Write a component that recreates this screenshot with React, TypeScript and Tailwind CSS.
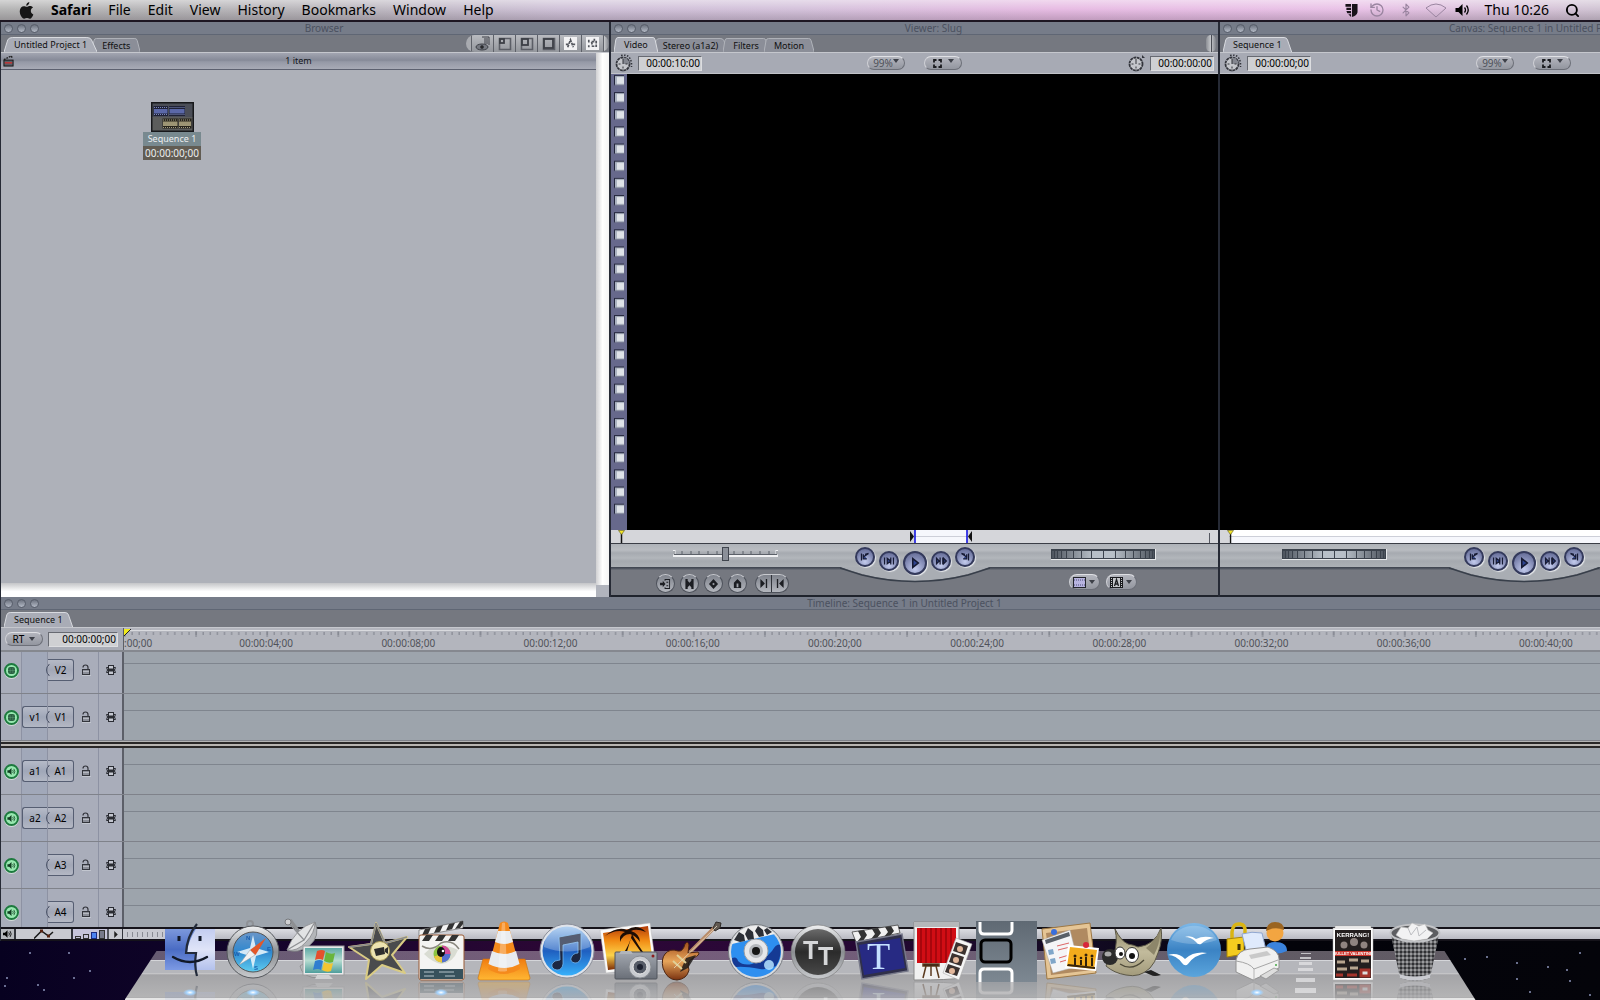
import { Bluetooth, History, Search } from "lucide-react";
import { clsx } from "clsx";

const MENUS = ["File", "Edit", "View", "History", "Bookmarks", "Window", "Help"];

const RULER_LABELS = [
  "00:00:04;00",
  "00:00:08;00",
  "00:00:12;00",
  "00:00:16;00",
  "00:00:20;00",
  "00:00:24;00",
  "00:00:28;00",
  "00:00:32;00",
  "00:00:36;00",
  "00:00:40;00",
];

interface Track {
  name: string;
  source?: string;
  kind: "video" | "audio";
}

const VIDEO_TRACKS: Track[] = [
  { name: "V2", kind: "video" },
  { name: "V1", source: "v1", kind: "video" },
];

const AUDIO_TRACKS: Track[] = [
  { name: "A1", source: "a1", kind: "audio" },
  { name: "A2", source: "a2", kind: "audio" },
  { name: "A3", kind: "audio" },
  { name: "A4", kind: "audio" },
];

/* ---------- Menu bar ---------- */

const SpeakerGlyph = ({ className }: { className?: string }) => (
  <svg viewBox="0 0 14 12" className={className} fill="currentColor">
    <path d="M0 4h3l4-4v12L3 8H0z" />
    <path d="M9 3.500q2 2.500 0 5M11 1.500q3.500 4.500 0 9" fill="none" stroke="currentColor" strokeWidth="1.300" />
  </svg>
);

const MenuBar = () => (
  <header className="flex h-[22px] shrink-0 items-center border-b-2 border-[#1d1622] bg-[linear-gradient(to_bottom,rgba(255,255,255,.45),rgba(255,255,255,.05)_45%,rgba(60,50,60,.22)),linear-gradient(to_right,#b2b2b2,#b6b3b8_20%,#cdbfd6_35%,#d3c0da_50%,#e6b9e2_66%,#e8c0e6_85%,#cfc2d2)] pr-5 pl-[19px] text-[14px] leading-5 text-black">
    <nav className="flex items-center gap-[17px]">
      <button aria-label="Apple menu">
        <svg viewBox="0 0 16 18" className="h-[17px] w-[15px]" fill="#161616">
          <path d="M11 0c.2 1.900-1.500 3.900-3.300 4C7.500 2.200 9.200.3 11 0zM12.600 9.500c0-1.800 1.100-2.800 2.400-3.600C14 4.600 12.700 4.300 11.600 4.300c-1.500 0-2.400.8-3.300.8S6.300 4.400 5.200 4.400C3 4.500.8 6.300.8 9.800c0 3.800 2.600 8 4.700 8 1.100 0 1.600-.7 3-.7 1.300 0 1.800.7 3 .7 1.600 0 3.100-2.600 3.800-4.600-1.700-.7-2.700-2-2.700-3.700z" />
        </svg>
      </button>
      <button className="font-bold">Safari</button>
      {MENUS.map((menu) => (
        <button key={menu}>{menu}</button>
      ))}
    </nav>
    <div className="ml-auto flex items-center">
      <svg viewBox="0 0 13 14" className="mr-[11px] h-[13px] w-[13px]" fill="#18121a">
        <path d="M0 0h6v3H0zM1 4h5v2.500H1zM1 7.500h5V10H2zM3 11h3v3zM7 0h6v9q-1 4-6 5z" />
      </svg>
      <History className="mr-[14px] size-[16px] text-[#9a85a0]" />
      <Bluetooth className="mr-3 size-[14px] text-[#9a85a0]" />
      <svg viewBox="0 0 22 15" className="mr-2 h-[15px] w-[22px]" fill="none" stroke="#9a85a0">
        <path d="M1 5Q11-3 21 5L11 14z" />
      </svg>
      <SpeakerGlyph className="mr-[14px] h-3 w-[15px]" />
      <time>Thu 10:26</time>
      <Search className="ml-4 size-[15px]" strokeWidth={3} />
    </div>
  </header>
);

/* ---------- Shared window parts ---------- */

const TitleBar = ({ title, className = "pl-[38px]" }: { title: string; className?: string }) => (
  <div
    className={clsx(
      "relative flex h-[13px] shrink-0 items-center justify-center border-b border-[#5f6674] bg-[#767c89] text-[10px] leading-3 text-[#4b515f]",
      className,
    )}
  >
    <div className="absolute left-[3px] flex gap-[4px]">
      {["Close", "Minimize", "Zoom"].map((label) => (
        <button
          key={label}
          aria-label={label}
          className="size-[9px] rounded-full border border-[#575d6a] bg-linear-to-b from-[#6d7380] to-[#b4bac6]"
        />
      ))}
    </div>
    <span className="whitespace-nowrap">{title}</span>
  </div>
);

const Tab = ({ label, active }: { label: string; active?: boolean }) => (
  <button
    role="tab"
    aria-selected={!!active}
    className={clsx(
      "relative -mr-[5px] px-[10px] text-[9px] whitespace-nowrap text-[#101010]",
      active ? "z-10 h-[15px] leading-[16px]" : "h-[14px] leading-[15px]",
    )}
  >
    <svg className="absolute inset-0 h-full w-full" viewBox="0 0 100 15" preserveAspectRatio="none">
      <path
        d="M0 15L4 3Q5 .5 9 .5H89Q93 .5 94 3L100 15"
        fill={active ? "#a9acb6" : "#8b8e98"}
        stroke={active ? "#d9dbe0" : "#b0b3ba"}
        vectorEffect="non-scaling-stroke"
      />
    </svg>
    <span className="relative">{label}</span>
  </button>
);

const TabStrip = ({ tabs, children }: { tabs: string[]; children?: React.ReactNode }) => (
  <div className="flex h-[18px] shrink-0 items-end justify-between border-b border-[#c5c7cd] bg-[#757880] pl-[3px]">
    <div role="tablist" className="flex items-end">
      {tabs.map((tab, i) => (
        <Tab key={tab} label={tab} active={i === 0} />
      ))}
    </div>
    {children}
  </div>
);

const EndCap = () => (
  <span className="mr-[2px] flex h-[17px] w-[10px] justify-center rounded-full bg-linear-to-r from-[#8b8e94] via-[#c9cbce] to-[#7d8087]">
    <span className="w-px bg-[#4a4d54]" />
  </span>
);

const Timecode = ({ label, value, className }: { label: string; value: string; className?: string }) => (
  <input
    aria-label={label}
    defaultValue={value}
    className={clsx(
      "h-[15px] border border-t-[#676a72] border-r-[#dcdde0] border-b-[#dcdde0] border-l-[#676a72] bg-[#cfd0d3] pr-px text-right text-[10px] leading-3 text-black outline-none",
      className,
    )}
  />
);

const Pill = ({ label, children, className }: { label: string; children: React.ReactNode; className?: string }) => (
  <button
    aria-label={label}
    className={clsx(
      "flex items-center justify-center rounded-full border border-t-[#dfe0e4] border-r-[#6c6f78] border-b-[#6c6f78] border-l-[#d0d1d6] bg-linear-to-b from-[#b3b5bd] to-[#93969f]",
      className,
    )}
  >
    {children}
  </button>
);

const DownArrow = ({ className }: { className?: string }) => (
  <svg viewBox="0 0 6 4" className={clsx("h-1 w-[6px]", className)} fill="#3d4048">
    <path d="M0 0h6L3 4z" />
  </svg>
);

/* ---------- Browser ---------- */

const BrowserButtons = () => {
  const cell = "flex h-[17px] w-[22px] items-center justify-center border-r border-[#5e6169] bg-linear-to-b from-[#b9bbc0] to-[#93969c]";
  return (
    <div className="flex overflow-hidden rounded-full">
      <span className="h-[17px] w-[6px] border-r border-[#5e6169] bg-[#a9abb0]" />
      <button aria-label="View" className={cell}>
        <svg viewBox="0 0 16 15" className="h-[15px] w-4" fill="none" stroke="#3c3f46">
          <path d="M7 1h7v8M9 3h4M9 5h4M9 7h4" />
          <ellipse cx="7" cy="11" rx="6" ry="3" fill="#777a82" />
          <circle cx="7" cy="11" r="1.500" fill="#222" />
        </svg>
      </button>
      {[5, 7, 10].map((size) => (
        <button key={size} aria-label={`Layout ${size}`} className={cell}>
          <svg viewBox="0 0 14 14" className="size-[14px]" fill="none" stroke="#3c3f46">
            <path d="M1.500 1.500h11v11h-11z" strokeWidth="1.600" stroke="#5b5e66" />
            <rect x="2" y="2" width={size - 1} height={size - 1} strokeWidth="1.800" />
          </svg>
        </button>
      ))}
      {["M4 11l3-8 3 8M2 8h3M9 8h3", "M3 3v3M3 9v2M6 5h5v5H7zM9 2v2"].map((d) => (
        <button key={d} aria-label="Filter" className={cell}>
          <svg viewBox="0 0 14 14" className="size-[13px]" fill="none" stroke="#54575e" strokeWidth="1.800">
            <rect x="0" y="0" width="14" height="14" fill="#f2f2f4" stroke="none" />
            <path d={d} strokeDasharray="3 1" />
          </svg>
        </button>
      ))}
      <span className="h-[17px] w-[5px] bg-linear-to-r from-[#c9cbce] to-[#7d8087]" />
    </div>
  );
};

const Browser = () => (
  <section className="flex w-[611px] shrink-0 flex-col border-r-2 border-l border-[#262a35]">
    <TitleBar title="Browser" />
    <TabStrip tabs={["Untitled Project 1", "Effects"]}>
      <BrowserButtons />
    </TabStrip>
    <div className="flex min-h-0 flex-1">
      <div className="flex flex-1 flex-col bg-[#aeb1b9]">
        <div className="relative flex h-[17px] items-center justify-center border-b border-[#5d6170] bg-[linear-gradient(to_bottom,#a2a5b1,#868a98_45%,#9599a6_55%,#a8abb6)] text-[9px] text-[#14161b]">
          <svg viewBox="0 0 12 13" className="absolute left-[2px] h-3 w-[11px]">
            <path d="M1 5L9 1l1 2" fill="none" stroke="#222" strokeWidth="1.600" strokeDasharray="2 1" />
            <rect x="1" y="5.500" width="10" height="6.500" fill="#5a5d66" stroke="#111" />
            <path d="M2 8.500h8" stroke="#c33" strokeWidth="1.500" />
          </svg>
          1 item
        </div>
        <div className="flex flex-1 items-start pt-[32px] pl-[142px]">
          <figure className="flex w-[58px] flex-col items-center text-[9px]">
            <svg viewBox="0 0 43 30" className="h-[30px] w-[43px]">
              <rect width="43" height="30" fill="#17181b" />
              <rect x="1.500" y="1.500" width="40" height="14" fill="#4b4e57" />
              <rect x="1.500" y="15" width="40" height="13.500" fill="#5c5d5c" />
              <g fill="#1f2236">
                <rect x="2.500" y="4" width="14.500" height="10" />
                <rect x="18" y="4" width="16" height="10" />
              </g>
              <g fill="#26241c">
                <rect x="11.500" y="16.500" width="15.500" height="10" />
                <rect x="27.500" y="16.500" width="13" height="10" />
              </g>
              <g stroke="#7d86ba" strokeDasharray="1 1">
                <path d="M3 5.500h13M18.500 5.500h15M3 12.500h13M18.500 12.500h15" />
              </g>
              <rect x="3" y="7" width="13.500" height="4.500" fill="#5b68a8" />
              <rect x="18.500" y="7" width="15" height="4.500" fill="#5b68a8" />
              <rect x="12" y="19.500" width="14.500" height="4.500" fill="#9d9574" />
              <rect x="28" y="19.500" width="12" height="4.500" fill="#9d9574" />
              <g stroke="#a39c80" strokeDasharray="1 1">
                <path d="M12 18h14.500M28 18h12M12 25.500h14.500M28 25.500h12" />
              </g>
            </svg>
            <figcaption className="w-full text-center text-[#eceeef]">
              <span className="block h-[14px] bg-[#78898f] leading-[14px]">Sequence 1</span>
              <span className="block h-[14px] bg-[#615c53] text-[10px] leading-[14px]">00:00:00;00</span>
            </figcaption>
          </figure>
        </div>
        <div className="h-[14px] bg-linear-to-b from-[#c4c5c8] to-white to-60%" />
      </div>
      <div className="flex w-[13px] flex-col">
        <div className="flex-1 bg-linear-to-r from-[#d0d0d2] via-white to-[#f4f4f4]" />
        <div className="h-3 bg-[#b1b4bd]" />
      </div>
    </div>
  </section>
);

/* ---------- Viewer / Canvas ---------- */

const Clock = ({ shaded }: { shaded?: boolean }) => (
  <svg viewBox="0 0 18 18" className="size-[18px] shrink-0">
    <circle cx="8" cy="10" r="6.500" fill="#c4c6cb" stroke="#32343b" strokeWidth="1.800" strokeDasharray="2.800 .6" />
    {shaded ? (
      <>
        <path d="M8 10V3.500A6.500 6.500 0 0 1 14.500 10z" fill="#83868f" />
        <path d="M6 1.500q9-2 10.500 7.500v4" fill="none" stroke="#32343b" strokeWidth="1.500" strokeDasharray="1.500 1.500" />
      </>
    ) : (
      <path d="M14 1l3 3h-3z" fill="#32343b" />
    )}
    <path d="M8 10V5M3.500 10h2M8 14.500v-2M12.500 10h-2" stroke="#32343b" />
  </svg>
);

const ZoomPills = () => (
  <>
    <Pill label="Zoom level" className="h-[14px] w-[38px] text-[10px] leading-3 text-[#4d5058]">
      99%
      <DownArrow className="mb-1" />
    </Pill>
    <Pill label="View options" className="ml-[19px] h-[14px] w-[38px] gap-[6px]">
      <svg viewBox="0 0 9 9" className="size-[9px]" fill="none" stroke="#1b1c20" strokeWidth="1.800">
        <path d="M3.500 1H1v2.500M5.500 1H8v2.500M3.500 8H1V5.500M5.500 8H8V5.500" />
      </svg>
      <DownArrow className="mb-1" />
    </Pill>
  </>
);

const TRANSPORT = [
  { label: "Previous edit", path: "M5 5v8M13 5l-6 4M7 6v5h4M13 5l-4 1", drop: "mt-[3px]", size: "size-[20px]" },
  { label: "Play in to out", path: "M4 5v8M14 5v8M7 6v6l4-3zM11 5v8", drop: "mt-[7px]", size: "size-[20px]" },
  { label: "Play", path: "M7 5v8l5-4z", drop: "mt-[7px]", size: "size-[24px]" },
  { label: "Play around", path: "M8 5v8M4 6v6l3-3zM11 5v8M12 6v6l3-3z", drop: "mt-[7px]", size: "size-[20px]" },
  { label: "Next edit", path: "M13 5v8M5 5l6 4M11 6v5H7M5 5l4 1", drop: "mt-[3px]", size: "size-[20px]" },
];

const Transport = () => (
  <div className="relative flex h-[52px] w-[150px] items-start justify-center gap-[4px]">
    <svg viewBox="0 0 150 16" className="absolute top-[23px] left-0 h-4 w-[150px]">
      <path d="M0 0Q12 4 22 7Q75 21 128 7Q138 4 150 0z" fill="#a9adb3" />
      <path d="M0 1Q12 5 22 8Q75 21 128 8Q138 5 150 1" fill="none" stroke="#383f4a" strokeWidth="1.500" />
    </svg>
    {TRANSPORT.map(({ label, path, drop, size }) => (
      <button
        key={label}
        aria-label={label}
        className={clsx(
          "relative shrink-0 rounded-full border-2 border-[#343a5c] bg-[radial-gradient(circle_at_50%_80%,#c3cbed,#7e86b0_60%,#5b628c)] shadow-[1px_1px_1px_#e8eaee]",
          drop,
          size,
        )}
      >
        <svg viewBox="0 0 18 18" className="h-full w-full" fill="#2f458f" stroke="#161a33" strokeWidth="1.400">
          <path d={path} />
        </svg>
      </button>
    ))}
  </div>
);

const JOG_LINES = [3, 6, 10, 15, 22, 30, 40, 52, 64, 74, 82, 89, 94, 98, 101];

const JogWheel = () => (
  <svg viewBox="0 0 105 11" className="h-[11px] w-[105px]">
    <defs>
      <linearGradient id="jog">
        <stop offset="0" stopColor="#4d545e" />
        <stop offset=".4" stopColor="#b8c0c8" />
        <stop offset=".6" stopColor="#b8c0c8" />
        <stop offset="1" stopColor="#4d545e" />
      </linearGradient>
    </defs>
    <rect width="105" height="11" fill="#e6e8ea" />
    <rect width="104" height="10" fill="#3b424c" />
    <rect x="1" y="2" width="102" height="7" fill="url(#jog)" />
    {JOG_LINES.map((x) => (
      <path key={x} d={`M${x + 0.5} 2v7`} stroke="#3b424c" />
    ))}
  </svg>
);

const ShuttleSlider = () => (
  <div className="relative h-[14px] w-[105px]">
    <svg viewBox="0 0 105 14" className="absolute inset-0 h-full w-full">
      <path d="M1 3v5.500h103V3" fill="none" stroke="#f0f1f3" strokeWidth="3" />
      <path d="M1 4v3.500h103V4M9 4v3M18 4v3M26 4v3M35 4v3M44 4v3M61 4v3M70 4v3M78 4v3M87 4v3M96 4v3" fill="none" stroke="#5b6068" />
    </svg>
    <input
      type="range"
      aria-label="Shuttle"
      defaultValue={50}
      className="absolute inset-0 h-[14px] w-full appearance-none bg-transparent [&::-webkit-slider-thumb]:h-[14px] [&::-webkit-slider-thumb]:w-[7px] [&::-webkit-slider-thumb]:appearance-none [&::-webkit-slider-thumb]:border [&::-webkit-slider-thumb]:border-[#40454e] [&::-webkit-slider-thumb]:bg-[#8b9099]"
    />
  </div>
);

const ROUND_BUTTONS = [
  { label: "Match frame", path: "M0 4h3V2l3 3.500L3 9V7H0zM5 0h6v11H5V9h1v1h4V1H6v1H5zM7 3h2v1H7zM7 7h2v1H7z" },
  { label: "Mark clip", path: "M1.500 0H4v2l2 2 2-2V0h2.500v11H8V9L6 7 4 9v2H1.500z" },
  { label: "Add keyframe", path: "M6 0l5 5.500L6 11 1 5.500zM6 4L4.500 5.500 6 7l1.500-1.500z" },
  { label: "Add marker", path: "M2 10V4l4-4 4 4v6zM5 5v4h2V5z" },
];

const EditButtons = () => (
  <div className="flex gap-[5px]">
    {ROUND_BUTTONS.map(({ label, path }) => (
      <button
        key={label}
        aria-label={label}
        className="flex size-[19px] items-center justify-center rounded-full border border-[#4e525b] border-t-[#c8cacf] bg-linear-to-b from-[#7f838c] to-[#b4b7be]"
      >
        <svg viewBox="0 0 12 11" className="h-[10px] w-[11px]" fill="#1c1e23" fillRule="evenodd">
          <path d={path} />
        </svg>
      </button>
    ))}
    <div className="ml-[3px] flex h-[19px] overflow-hidden rounded-full border border-[#4e525b] border-t-[#c8cacf] bg-linear-to-b from-[#7f838c] to-[#b4b7be]">
      <button aria-label="Mark in" className="flex w-[16px] items-center justify-center border-r border-[#30333a]">
        <svg viewBox="0 0 8 10" className="h-[9px] w-2" fill="#1c1e23">
          <path d="M0 0l5 5-5 5zM6 0h1.500v10H6z" />
        </svg>
      </button>
      <button aria-label="Mark out" className="flex w-[16px] items-center justify-center">
        <svg viewBox="0 0 8 10" className="h-[9px] w-2" fill="#1c1e23">
          <path d="M8 0L3 5l5 5zM.5 0H2v10H.5z" />
        </svg>
      </button>
    </div>
  </div>
);

const GeneratorPills = () => (
  <div className="flex gap-[6px]">
    <Pill label="Recent clips" className="h-4 w-[31px] gap-[3px]">
      <svg viewBox="0 0 13 11" className="h-[11px] w-[13px]">
        <rect x=".5" y=".5" width="12" height="10" fill="#b7b3df" stroke="#23252c" />
        <path d="M1 3h11M1 8h11" stroke="#4a4a78" strokeDasharray="1 1" />
      </svg>
      <DownArrow />
    </Pill>
    <Pill label="Generators" className="h-4 w-[31px] gap-[3px]">
      <svg viewBox="0 0 13 11" className="h-[11px] w-[13px]">
        <rect width="13" height="11" fill="#1b1c20" />
        <rect x="3" y="1" width="7" height="9" fill="#c6c8cc" />
        <path d="M1.500 1v9M11.500 1v9" stroke="#c6c8cc" strokeDasharray="1 1" />
        <path d="M4.500 9L6.500 2.500 8.500 9M5 7h3" fill="none" stroke="#1b1c20" strokeWidth="1.300" />
      </svg>
      <DownArrow />
    </Pill>
  </div>
);

const Playhead = () => (
  <svg viewBox="0 0 7 13" className="h-[13px] w-[7px] shrink-0">
    <path d="M3.500 3v10" stroke="#111" strokeWidth="1.500" />
    <path d="M.5.500h6L3.500 4.500z" fill="#f1e52a" stroke="#5b5510" strokeWidth=".6" />
  </svg>
);

interface ControlDeckProps {
  left: React.ReactNode;
  right: React.ReactNode;
}

const ControlDeck = ({ left, right }: ControlDeckProps) => (
  <div className="grid h-[53px] shrink-0 grid-cols-[1fr_150px_1fr] border-b-2 border-[#1f232c] bg-[linear-gradient(to_bottom,#aeb2b8_0,#b9bcc1_6px,#a6aab0_9px,#b2b6bb_14px,#a5a9af_17px,#acb0b5_23px,#3b414c_23px,#565b66_25px,#757880_26px)]">
    {left}
    <Transport />
    {right}
  </div>
);

const Viewer = () => (
  <section className="flex w-[609px] shrink-0 flex-col border-r-2 border-[#262a35]">
    <TitleBar title="Viewer: Slug" />
    <TabStrip tabs={["Video", "Stereo (a1a2)", "Filters", "Motion"]}>
      <EndCap />
    </TabStrip>
    <div className="flex h-[21px] shrink-0 items-center border-b border-[#c1c3c9] bg-[#a7aab4] pr-[4px] pl-[4px]">
      <Clock shaded />
      <Timecode label="Timecode duration" value="00:00:10:00" className="ml-[5px] w-[64px]" />
      <div className="ml-[165px] flex">
        <ZoomPills />
      </div>
      <div className="ml-auto flex items-center gap-[4px]">
        <Clock />
        <Timecode label="Current timecode" value="00:00:00:00" className="w-[64px]" />
      </div>
    </div>
    <div className="flex min-h-0 flex-1 bg-black">
      <svg className="h-full w-[16px]">
        <defs>
          <pattern id="sprockets" width="16" height="17.150" patternUnits="userSpaceOnUse">
            <rect x="3" y="1" width="10" height="10" fill="#23253c" />
            <rect x="4" y="2" width="9" height="9" fill="#aab2c0" />
            <rect x="6" y="3" width="7" height="7" fill="#dfe3e8" />
          </pattern>
        </defs>
        <rect width="16" height="100%" fill="#67698c" />
        <rect width="16" height="443" fill="url(#sprockets)" />
      </svg>
    </div>
    <div className="flex h-[14px] shrink-0 items-start border-b border-[#3b3e46] bg-[#d5d6da] pr-[8px] pl-[7px]">
      <Playhead />
      <svg viewBox="0 0 62 13" className="ml-[285px] h-[13px] w-[62px]">
        <rect x="5" width="52" height="13" fill="#f6f7fc" />
        <path d="M5 6.500h52" stroke="#cdcfd8" />
        <path d="M0 1l4 5.500L0 12zM62 1l-4 5.500 4 5.500z" fill="#111" />
        <path d="M5 0v13M57 0v13" stroke="#1616e0" strokeWidth="1.600" />
      </svg>
      <span className="mt-[3px] ml-auto h-[10px] w-px bg-[#555861]" />
    </div>
    <ControlDeck
      left={
        <div className="flex flex-col gap-[13px] pt-[3px] pl-[45px]">
          <div className="pl-[17px]">
            <ShuttleSlider />
          </div>
          <EditButtons />
        </div>
      }
      right={
        <div className="flex flex-col items-start gap-[14px] pt-[5px] pl-[61px]">
          <JogWheel />
          <div className="pl-[18px]">
            <GeneratorPills />
          </div>
        </div>
      }
    />
  </section>
);

const Canvas = () => (
  <section className="flex min-w-0 flex-1 overflow-hidden">
    {/* the window keeps its width and runs off the right edge of the display */}
    <div className="flex w-[608px] shrink-0 flex-col">
      <TitleBar title="Canvas: Sequence 1 in Untitled Project 1" />
      <TabStrip tabs={["Sequence 1"]} />
      <div className="flex h-[21px] shrink-0 items-center border-b border-[#c1c3c9] bg-[#a7aab4] pl-[4px]">
        <Clock shaded />
        <Timecode label="Sequence timecode" value="00:00:00;00" className="ml-[5px] w-[64px]" />
        <div className="ml-[165px] flex">
          <ZoomPills />
        </div>
      </div>
      <div className="flex-1 bg-black" />
      <div className="h-[14px] shrink-0 border-b border-[#3b3e46] bg-[linear-gradient(to_right,#d5d6da_9px,transparent_9px),linear-gradient(to_bottom,#fff_6px,#cdcfd8_6px,#cdcfd8_7px,#f6f7fc_7px)] pl-[7px]">
        <Playhead />
      </div>
      <ControlDeck
        left={
          <div className="pt-[5px] pl-[62px]">
            <JogWheel />
          </div>
        }
        right={<div />}
      />
    </div>
  </section>
);

/* ---------- Timeline ---------- */

const Ruler = () => (
  <div className="relative h-[22px] flex-1 overflow-hidden bg-[#b3b5bd]">
    <svg className="absolute inset-x-0 top-0 h-[10px] w-full">
      <defs>
        <pattern id="ticks" width="7.110" height="10" patternUnits="userSpaceOnUse">
          <path d="M1 4v3" stroke="#7d808a" />
        </pattern>
        <pattern id="majorTicks" width="71.100" height="10" patternUnits="userSpaceOnUse">
          <path d="M1 3v6" stroke="#7d808a" />
        </pattern>
      </defs>
      <path d="M0 2.500h2000" stroke="#d9dade" />
      <rect width="100%" height="10" fill="url(#ticks)" />
      <rect width="100%" height="10" fill="url(#majorTicks)" />
      <path d="M0 1h7L0 8z" fill="#f1ea1c" />
      <path d="M7 1L0 8" stroke="#222" />
    </svg>
    <div className="flex w-[1493px] pt-[9px] text-[10px] leading-3 text-[#505259]">
      {/* first label starts left of the visible range */}
      <span className="w-[71px]">:00;00</span>
      {RULER_LABELS.map((label) => (
        <span key={label} className="flex-1 text-center">
          {label}
        </span>
      ))}
    </div>
  </div>
);

const LockIcon = () => (
  <svg viewBox="0 0 10 12" className="h-3 w-[10px]" fill="none" stroke="#33353c">
    <path d="M2 3.500Q2 1 4.500 1 7 1 7 3.500v2" strokeWidth="1.200" />
    <rect x="1.500" y="5.500" width="7" height="5" fill="#8b8e98" />
    <path d="M2 7.500h6M1 11.500h9" stroke="#d3d6de" strokeWidth=".6" />
  </svg>
);

const AutoSelectIcon = () => (
  <svg viewBox="0 0 12 12" className="h-3 w-3" fill="none" stroke="#2a2c33">
    <rect x="3.500" y="1.500" width="5" height="9" fill="#c3c6cf" />
    <path d="M3.500 3.500h-2l1 2.500-1 2.500h2M8.500 3.500h2l-1 2.500 1 2.500h-2" />
    <path d="M3 5h6v2H3z" fill="#2a2c33" />
  </svg>
);

const TrackRow = ({ track }: { track: Track }) => (
  <div className="flex h-[47px] shrink-0 border-b border-[#7f828a]">
    <div className="flex w-[123px] shrink-0 items-center border-r-2 border-[#5c5f68] bg-[#a9adba]">
      <div className="flex w-[20px] justify-center">
        <button
          aria-label={`Enable ${track.name}`}
          className="flex size-[15px] items-center justify-center rounded-full border-2 border-[#1d7a3e] bg-[#98e8b0] text-[#123c22] shadow-[0_1px_0_#d3dcda]"
        >
          {track.kind === "audio" ? (
            <SpeakerGlyph className="h-[7px] w-[9px]" />
          ) : (
            <svg viewBox="0 0 8 8" className="size-[7px]">
              <rect width="8" height="8" rx="2.500" fill="#2a5f41" />
              <path d="M2.500 1v6M5.500 1v6M0 4h8" stroke="#6fb588" strokeWidth=".4" />
            </svg>
          )}
        </button>
      </div>
      <div className="flex h-full w-[27px] items-center justify-end border-x border-[#8d92a3] bg-[#a1a8b9] text-[10px]">
        {track.source ? (
          <button className="h-[22px] w-[25px] rounded-l-[3px] border border-r-0 border-[#565e72] bg-linear-to-b from-[#b6bbc8] via-[#a0a7b8] to-[#b2b7c4]">
            {track.source}
          </button>
        ) : null}
      </div>
      <button className="relative h-[22px] w-[26px] rounded-r-[3px] border border-l-0 border-[#565e72] bg-linear-to-b from-[#b6bac6] via-[#a2a7b6] to-[#b4b8c4] text-[10px]">
        <svg viewBox="0 0 4 20" className="absolute top-0 -left-[2px] h-5 w-1" fill="none" stroke="#4c5468">
          <path d="M3 4v1Q.5 6 .5 10T3 15v1" />
        </svg>
        {track.name}
      </button>
      <button aria-label={`Lock ${track.name}`} className="flex h-full w-[25px] items-center justify-center border-r border-[#8d92a3]">
        <LockIcon />
      </button>
      <button aria-label={`Auto select ${track.name}`} className="flex flex-1 justify-center">
        <AutoSelectIcon />
      </button>
    </div>
    <div className="flex-1 bg-[#9da4ac]">
      <div className="h-[17px] border-b border-[#7f858e]" />
    </div>
  </div>
);

const Timeline = () => (
  <section className="flex shrink-0 flex-col border-l border-[#262a35]">
    <TitleBar title="Timeline: Sequence 1 in Untitled Project 1" className="pl-[208px]" />
    <TabStrip tabs={["Sequence 1"]} />
    <div className="flex border-b-2 border-[#85888f]">
      <div className="flex w-[123px] shrink-0 items-center justify-between border-r border-[#5c5f68] bg-[#a9acb6] pr-[5px] pl-[4px]">
        <Pill label="RT" className="h-[14px] w-[38px] gap-[5px] text-[10px] leading-3">
          RT
          <DownArrow />
        </Pill>
        <Timecode label="Playhead timecode" value="00:00:00;00" className="w-[70px]" />
      </div>
      <Ruler />
    </div>
    {/* upper tracks are scrolled slightly under the ruler */}
    <div className="flex h-[89px] flex-col justify-end overflow-hidden">
      {VIDEO_TRACKS.map((track) => (
        <TrackRow key={track.name} track={track} />
      ))}
    </div>
    <div className="h-[7px] bg-[linear-gradient(to_bottom,#b4b4b4_1px,#2a2828_1px,#2a2828_3px,#b9b6b2_3px,#b9b6b2_5px,#2a2828_5px)]" />
    <div className="h-[179px] overflow-hidden">
      {AUDIO_TRACKS.map((track) => (
        <TrackRow key={track.name} track={track} />
      ))}
    </div>
    <div className="flex h-[14px] border-y-2 border-[#15131a] bg-[#c9cad1] [&>*]:h-full">
      <button aria-label="Audio controls" className="flex w-[15px] items-center justify-center border-r-2 border-[#33353c] bg-[#b6b8bd]">
        <SpeakerGlyph className="h-2 w-[9px]" />
      </button>
      <button aria-label="Clip keyframes" className="flex w-[57px] items-center justify-center border-r-2 border-[#33353c]">
        <svg viewBox="0 0 20 10" className="h-[10px] w-5" fill="none" stroke="#191919" strokeWidth="1.500">
          <path d="M0 9.500L7.500 2l7 5L19 3" />
          <path d="M6 2h3M13 7h3" stroke="#521" strokeWidth="3" />
        </svg>
      </button>
      <button aria-label="Track height" className="flex w-[36px] items-end gap-[2px] border-r-2 border-[#55575f] bg-[#c6c4da] px-[2px]">
        <i className="h-[3px] w-[6px] border border-[#333]" />
        <i className="h-[5px] w-[6px] border border-[#333]" />
        <i className="h-[7px] w-[6px] border border-[#1a2a80] bg-[#4b82f0]" />
        <i className="h-[9px] w-[6px] border border-[#333] bg-[#77798a]" />
      </button>
      <button aria-label="Track layout" className="flex w-[14px] items-center justify-center border-r border-[#33353c]">
        <svg viewBox="0 0 4 8" className="h-[7px] w-1">
          <path d="M0 0l4 4-4 4z" fill="#222" />
        </svg>
      </button>
      <span className="w-[44px] bg-[repeating-linear-gradient(to_right,transparent_0,transparent_4px,#8a8c94_4px,#8a8c94_5px)] bg-[length:100%_5px] bg-center bg-no-repeat" />
      <span className="flex-1 border-l-2 border-[#33353c] bg-linear-to-b from-[#dcdde2] to-[#b9bac2]" />
    </div>
  </section>
);

/* ---------- Dock icons ---------- */

const FinderIcon = () => (
  <>
    <rect x="7" y="11" width="50" height="41" fill="url(#finderLight)" />
    <path d="M7 11h31q-8 12-9 24h9q0 8 1 17H7z" fill="url(#finderDark)" />
    <path d="M39 6Q29 18 28 35h10Q36 48 39 58" fill="none" stroke="#222a3a" strokeWidth="2.200" />
    <path d="M21 18v5M42 18v5" stroke="#111827" strokeWidth="3" />
    <path d="M15 39q17 10 34 0" fill="none" stroke="#111827" strokeWidth="2.400" strokeLinecap="round" />
  </>
);

const SafariIcon = () => (
  <>
    <circle cx="29" cy="6" r="3" fill="none" stroke="#8e9196" strokeWidth="2" />
    <circle cx="32" cy="34" r="26" fill="url(#chrome)" stroke="#55585d" />
    <circle cx="32" cy="34" r="20" fill="url(#sky)" stroke="#555" />
    <path d="M32 17l3 13 13 4-13 4-3 13-3-13-13-4 13-4z" fill="#e6f3fb" opacity=".9" />
    <path d="M45 20L34.500 37 29 32z" fill="#e2582a" />
    <path d="M18 47l16-10-5-5z" fill="#f2f2f2" stroke="#999" strokeWidth=".5" />
    <g fill="#1b5fae" fontSize="6" fontFamily="Liberation Sans, sans-serif" fontWeight="bold">
      <text x="25" y="22">N</text>
      <text x="33" y="52">S</text>
      <text x="13" y="38">W</text>
      <text x="46" y="33">E</text>
    </g>
  </>
);

const RemoteDesktopIcon = () => (
  <>
    <path d="M17 48q2 12 20 12l4-2q-16 0-18-14z" fill="#b9bbbd" stroke="#777" strokeWidth=".6" />
    <path d="M4 5l4-2 14 19" stroke="#8d8f92" strokeWidth="3" fill="none" />
    <path d="M32 4Q38 18 26 28 15 36 4 32z" fill="#b4b6b9" stroke="#7b7d80" strokeWidth=".8" />
    <path d="M32 4Q12 10 4 32 14 34 23 24 32 15 32 4z" fill="#e2e3e4" stroke="#86888b" strokeWidth=".8" />
    <path d="M4 3l17 19L32 4M21 22L4 32" stroke="#8d8f92" strokeWidth="1.300" fill="none" />
    <circle cx="5" cy="4" r="3" fill="#cfd0d2" stroke="#77797c" />
    <rect x="20" y="28" width="41" height="29" fill="#e9eaeb" stroke="#9a9b9d" />
    <rect x="22" y="30" width="37" height="25" fill="url(#teal)" />
    <path d="M34 33q5-2 8 0l-2 9q-4-2-8 0z" fill="#e4502c" />
    <path d="M43 34q5 3 9 1l-2 9q-4 2-9-1z" fill="#69b53c" />
    <path d="M32 43q5-2 8 0l-2 9q-3-2-8 0z" fill="#2f7ed0" />
    <path d="M41 44q5 3 9 1l-2 8q-4 2-9-1z" fill="#f3c530" />
    <path d="M34 57h12l4 4H32z" fill="#cfd0d1" />
  </>
);

const IMovieIcon = () => (
  <>
    <path
      d="M30 5L39 25 61 19 46 37 59 55 36 47 20 61 23 42 3 29 25 26z"
      fill="#4a4b4d"
      stroke="#d9cb84"
      strokeWidth="2"
      strokeLinejoin="round"
    />
    <path d="M30 5L39 25 61 19M3 29L25 26 30 5" fill="none" stroke="#8a8b8e" strokeWidth="1.500" />
    <circle cx="34" cy="33" r="9.500" fill="#ece3b0" stroke="#a99a55" />
    <path d="M28 31l10-2 1 7-9 2zM39 31l3-2v7l-3-2z" fill="#2d2d2d" />
  </>
);

const FinalCutIcon = () => (
  <>
    <path d="M10 12L54 3v7L10 18z" fill="#f3f3f3" stroke="#555" strokeWidth=".6" />
    <path d="M16 11l6-1.300-3 6.500-6 1zM28 8.500l6-1.300-3 6.500-6 1.300zM40 6l6-1.300-3 6.500-6 1.300zM51 3.500l3-.5v3l-3 4-5 1z" fill="#333" />
    <rect x="10" y="17" width="45" height="45" rx="2" fill="#f4f4f2" stroke="#9a5b34" />
    <path d="M17 17h7l-4 6h-7zM30 17h7l-4 6h-7zM43 17h7l-4 6h-7z" fill="#333" />
    <path d="M15 36q13-14 34-4-5 13-17 14-9-2-17-10z" fill="#d9dcd2" />
    <path d="M13 28q10 6 19-3 11-4 18 6" fill="none" stroke="#8a887f" strokeWidth="1.500" />
    <circle cx="33" cy="36" r="8.500" fill="#8bc442" />
    <path d="M33 36v-8.500a8.500 8.500 0 0 1 8.500 8.500z" fill="#d24b9a" />
    <path d="M33 36h8.500a8.500 8.500 0 0 1-8.500 8.500z" fill="#5470cf" />
    <path d="M33 36v8.500a8.500 8.500 0 0 1-8-6z" fill="#e8c63d" />
    <ellipse cx="32" cy="34" rx="4" ry="5" fill="#101010" />
    <circle cx="34" cy="33" r="1.300" fill="#fff" />
    <path d="M11 51h43v10H11z" fill="#37515c" />
    <path d="M15 54h10M30 54h15M15 58h10M36 58h10" stroke="#b7c5cb" strokeWidth="1" />
  </>
);

const VlcIcon = () => (
  <>
    <path d="M11 41h42l5 19q0 2-2 2H8q-2 0-2-2z" fill="url(#orange)" stroke="#c9700a" strokeWidth=".6" />
    <path d="M28 5q4-3 8 0l12 46q-16 10-32 0z" fill="#f58a1c" />
    <path d="M26 13h12l3 11q-9 4-18 0zM20 33q12 6 24 0l3.500 13q-15 8-31 0z" fill="#e9ebee" />
    <path d="M30 5q2-1 3 0l2 48q-5 1-9 0z" fill="#fff" opacity=".3" />
  </>
);

const ITunesIcon = () => (
  <>
    <circle cx="32" cy="33" r="27" fill="#dfe3ea" stroke="#8a8e98" />
    <circle cx="32" cy="33" r="24.500" fill="url(#itunes)" />
    <path d="M24 19l22-4v24q-1 6-6 6-5-1-4-5 2-5 7-5V24l-15 3v19q-1 6-6 6-6-1-5-6 2-4 8-4z" fill="#1c2743" stroke="#74b6f0" strokeWidth=".8" />
    <path d="M9 29a23 21 0 0 1 46 0q-23 9-46 0z" fill="#fff" opacity=".25" />
  </>
);

const IPhotoIcon = () => (
  <>
    <path d="M3 12L53 5l6 44L9 55z" fill="#fafafa" stroke="#bbb" strokeWidth=".5" />
    <path d="M6 15L51 8l5 38-45 6z" fill="url(#sunset)" />
    <path d="M26 36q7-10 9-20 5 10 14 22l-3-1L34 20l-5 17z" fill="#1d0d05" />
    <path d="M8 18q12-10 22-6 10-7 19 2-10-4-15-1 9 3 9 11-5-7-10-8-7 0-10 8-1-8 5-10-9-3-20 4z" fill="#1d0d05" />
    <rect x="18" y="34" width="42" height="27" rx="1" fill="url(#camera)" stroke="#50555d" />
    <path d="M24 33h10l2 3H22z" fill="#b1b5bb" />
    <circle cx="43" cy="49" r="11" fill="#c8cbd0" stroke="#888c92" />
    <circle cx="43" cy="49" r="7" fill="#565c68" stroke="#eee" />
    <circle cx="43" cy="49" r="3" fill="#1c2130" />
    <circle cx="56" cy="38" r="1.500" fill="#8d1f1f" />
  </>
);

const GarageBandIcon = () => (
  <>
    <path d="M28 36L55 9" stroke="#b98b68" strokeWidth="3.500" />
    <path d="M53 10l3-6 5 1-1 5-5 3z" fill="#625a52" stroke="#302c29" />
    <path d="M5 36q5-6 13-3 5 1 7-7 3-4 4 1l-1 8 10-1q3 3-5 6-7 4-4 12-2 9-12 10-10 0-14-12-2-9 2-14z" fill="url(#wood)" stroke="#4a2410" />
    <path d="M36 37l-10 3-6 14 8-4z" fill="#1d1a18" opacity=".85" />
    <path d="M17 37l9 8M13 43l9 8" stroke="#e0cf96" strokeWidth="2" />
    <path d="M14 50L57 8" stroke="#e9dcc4" strokeWidth=".8" />
  </>
);

const IDvdIcon = () => (
  <>
    <circle cx="33" cy="34" r="27.500" fill="#d8dadd" stroke="#777b80" />
    <circle cx="33" cy="34" r="25" fill="#2e8ff0" />
    <path d="M9 25Q16 8 33 8q12 0 19 8L9 26z" fill="#eee" />
    <path d="M16 14l5 3 1 6-5 1-6-2zM25 10l5 4 1 7-6 1-3-6zM35 8l5 4 1 6-5 1-4-6zM44 10l5 4-5 3-3-5z" fill="#2c2f36" />
    <path d="M9 40q5-2 6 3 5 5 14 3 13-4 20-13 5-8 8-6 2 12-4 21-8 4-16 3-16-3-24-2-4-3-4-9z" fill="#153a94" />
    <circle cx="46" cy="47" r="5" fill="#b5e4ff" opacity=".85" />
    <circle cx="33" cy="33" r="12" fill="#e6e7ea" stroke="#9b9fa6" />
    <circle cx="33" cy="33" r="7" fill="#b4b7bc" />
    <circle cx="33" cy="33" r="4" fill="#161616" />
  </>
);

const TextTransformIcon = () => (
  <>
    <circle cx="32" cy="34" r="27" fill="url(#chrome)" stroke="#777" strokeWidth=".6" />
    <circle cx="32" cy="34" r="23" fill="url(#charcoal)" />
    <g fill="#d6d7d9" fontSize="25" fontFamily="Liberation Sans, sans-serif" fontWeight="bold">
      <text x="17" y="41">T</text>
      <text x="32" y="47">T</text>
    </g>
  </>
);

const LiveTypeIcon = () => (
  <>
    <path d="M4 14L50 7l2 8L8 24z" fill="#f0f0f0" stroke="#444" strokeWidth=".8" />
    <path d="M10 13l6-1 3 5-4 6-6 1 4-5zM24 11l6-1 3 5-4 5-6 1 4-5zM37 9l6-1 3 5-4 5-6 1 4-5z" fill="#333" />
    <path d="M8 24l46-8 6 37-46 8z" fill="#30304a" stroke="#77798a" strokeWidth="1.500" />
    <path d="M11 27l41-7 5 30-41 7z" fill="#272a83" />
    <text x="19" y="51" fill="#c4e0ff" fontSize="38" fontFamily="Liberation Serif, serif">
      T
    </text>
  </>
);

const PhotoBoothIcon = () => (
  <>
    <path d="M3 4h45v56q-8 2-45 2z" fill="#f1f1f1" stroke="#8a8a8a" />
    <path d="M3 4h45v5H3z" fill="#b5b7b9" />
    <rect x="6" y="10" width="39" height="35" fill="#d00d14" />
    <path d="M10 10v35M15 10v35M20 10v35M25 10v35M30 10v35M35 10v35M40 10v35" stroke="#9e060c" strokeWidth="1.600" />
    <path d="M12 46h16v2H12zM15 48l-3 12M25 48l3 12M20 48v10" stroke="#5b3a1f" strokeWidth="1.500" />
    <path d="M45 20l16 6-13 36-16-7z" fill="#f5f5f5" stroke="#aaa" strokeWidth=".6" />
    <path d="M45 24l12 4-3 9-12-4zM41 35l12 4-3 9-12-4zM37 46l12 4-3 8-12-4z" fill="#3c3230" />
    <g fill="#e3b79b">
      <circle cx="49" cy="31" r="3" />
      <circle cx="45" cy="42" r="3" />
      <circle cx="41" cy="53" r="3" />
    </g>
  </>
);

const SpacesIcon = () => (
  <>
    <rect x="2" y="3" width="61" height="61" fill="url(#slate)" />
    <path d="M6 4v8q0 4 4 4h24q4 0 4-4V4M6 64V55q0-4 4-4h24q4 0 4 4v9" fill="none" stroke="#fff" strokeWidth="3" />
    <rect x="7" y="22" width="30" height="22" rx="4" fill="none" stroke="#000" strokeWidth="3" />
  </>
);

const CorkboardIcon = () => (
  <>
    <path d="M5 11l48-6 6 50-49 6z" fill="#e5c595" stroke="#9c7744" />
    <path d="M9 15l41-5 5 42-41 5z" fill="#b08a61" />
    <path d="M5 22l28-10 9 36-26 7z" fill="#f4f5f7" stroke="#aaa" strokeWidth=".5" />
    <path d="M8 22l24-8 1 4-24 8z" fill="#596069" />
    <path d="M20 28l12-3M21 32l12-3M22 40l10-3M23 44l10-3" stroke="#d66" />
    <path d="M11 32l5-1 1 5-5 1zM13 41l5-1 1 5-5 1z" fill="#7fa6c9" />
    <path d="M31 27l31 3-3 23-31-3z" fill="#fff" />
    <path d="M33 29l27 3-3 19-27-3z" fill="#f3ac1c" />
    <g fill="#30200a">
      <path d="M37 47v-7h2v7zM43 47v-5h2v5zM48 48v-9h2v9zM54 48v-8h2v8z" />
      <circle cx="38" cy="38" r="1.500" />
      <circle cx="44" cy="40" r="1.300" />
      <circle cx="49" cy="37" r="1.500" />
      <circle cx="55" cy="38" r="1.500" />
    </g>
    <path d="M31 46l27 3v2l-28-3z" fill="#3a2508" />
    <circle cx="17" cy="14" r="3" fill="#3a6fdc" />
    <circle cx="49" cy="27" r="3" fill="#d8263a" />
  </>
);

const GimpIcon = () => (
  <>
    <path d="M15 11q6 12 13 15 6 1 10 3 17-2 23-19 2 12-3 25-3 10-8 15-10 10-24 7-12-2-20-9 2-8 8-12 4-12 1-25z" fill="url(#fur)" stroke="#5a5646" />
    <path d="M46 30q8-6 14-17 0 13-6 24z" fill="#8d866a" />
    <path d="M20 46q12 8 24-4" fill="none" stroke="#4d4938" strokeWidth="1.300" />
    <circle cx="10" cy="39" r="8" fill="#2b2b2b" />
    <ellipse cx="8" cy="36" rx="3.500" ry="2.500" fill="#aaa" />
    <ellipse cx="20" cy="35" rx="5" ry="6" fill="#fff" stroke="#333" />
    <ellipse cx="32" cy="37" rx="6.500" ry="7.500" fill="#fff" stroke="#333" />
    <circle cx="21" cy="36" r="2" fill="#111" />
    <circle cx="32" cy="38" r="3" fill="#111" />
    <path d="M44 54l7-2 10 5q-7 2-10 0z" fill="#222" />
  </>
);

const OpenOfficeIcon = () => (
  <>
    <circle cx="32" cy="32" r="27" fill="url(#ooBlue)" />
    <path d="M23 19q6-2 11 2 8-4 18-1-8 1-13 6-3 1-5-2-5-5-11-5z" fill="#fff" />
    <path d="M6 37q10-3 17 4 9-8 22-6-13 2-19 11-3 3-6-1-6-8-14-8z" fill="#fff" />
    <path d="M9 22a24 20 0 0 1 46 0q-23 8-46 0z" fill="#fff" opacity=".2" />
  </>
);

const PrinterIcon = () => (
  <>
    <path d="M7 20v-6q1-9 8-8 6 1 5 8v4" fill="none" stroke="#d9b413" strokeWidth="3.500" />
    <path d="M2 21l17-2v17l-17 3z" fill="#f4cc1f" stroke="#a98605" />
    <path d="M14 26v6" stroke="#3b2f05" strokeWidth="3" />
    <path d="M40 34q0-10 10-10 12 0 12 9-10 5-22 1z" fill="#3b83dc" />
    <circle cx="50" cy="15" r="8.500" fill="#f2a541" />
    <path d="M41 13q1-9 9-9 9 0 9 8-9-4-18 1z" fill="#9a6420" />
    <path d="M17 16q10-3 20-1l4 17-19 4z" fill="#dfeafc" stroke="#8fa6cf" />
    <path d="M11 42q2-10 14-11l18-2q11 4 11 12v9l-26 12-17-8z" fill="#f0f0f0" stroke="#909090" />
    <path d="M11 43q14 2 18 8l24-9" fill="none" stroke="#a5a5a5" />
    <path d="M29 51v11" stroke="#b5b5b5" />
    <path d="M24 37l18-4 4 4-20 4z" fill="#c9c9c9" />
    <path d="M35 58l14-8 5 2-13 9z" fill="#ddd" stroke="#888" strokeWidth=".7" />
    <circle cx="51" cy="47" r="1" fill="#4a4" />
  </>
);

const MagazineIcon = () => (
  <>
    <path d="M14 8h36v4H14z" fill="#fff" stroke="#999" strokeWidth=".5" />
    <rect x="12" y="10" width="40" height="52" fill="#fff" stroke="#aaa" strokeWidth=".5" />
    <rect x="14" y="12" width="36" height="48" fill="#241f1f" />
    <g fill="#8f8480">
      <circle cx="23" cy="27" r="3.500" />
      <circle cx="33" cy="24" r="4" />
      <circle cx="43" cy="27" r="3.500" />
    </g>
    <path d="M14 33h36v5H14z" fill="#c9332a" />
    <path d="M16 44h8M28 42h9M40 43h8M16 51h10M29 50h8" stroke="#b7a58f" strokeWidth="3" />
    <path d="M15 57h7M26 57h10M40 52h8v6h-8z" stroke="#a4342c" strokeWidth="3" fill="#ddd" />
    <g fontFamily="Liberation Sans, sans-serif" fontWeight="bold" fill="#fff" textAnchor="middle">
      <text x="32" y="19" fontSize="6">KERRANG!</text>
      <text x="32" y="37" fontSize="4">BULLET VALENTINE</text>
    </g>
  </>
);

const TrashIcon = () => (
  <>
    <path d="M8 17q24 11 48 0l-9 43q-15 5-30 0z" fill="#9a9b9d" />
    <path d="M8 17q24 11 48 0l-9 43q-15 5-30 0z" fill="url(#mesh)" />
    <path d="M16 56q16 5 32 0l-1 4q-15 5-30 0z" fill="#c9cad0" />
    <ellipse cx="32" cy="15" rx="24.500" ry="8.500" fill="#5d5e61" stroke="#c2c3c6" strokeWidth="2" />
    <path d="M13 17l5-8 7 1 4-5 7 3 6-2 3 6 5 3-6 6-13 2-12-2z" fill="#f2f2f3" stroke="#bbb" strokeWidth=".6" />
    <path d="M25 10l3 7 6-8 2 9 7-6" fill="none" stroke="#bdbec2" />
  </>
);

interface DockItem {
  name: string;
  icon: () => React.ReactNode;
  running?: boolean;
}

const DOCK_ITEMS: DockItem[] = [
  { name: "Finder", icon: FinderIcon, running: true },
  { name: "Safari", icon: SafariIcon, running: true },
  { name: "Remote Desktop", icon: RemoteDesktopIcon },
  { name: "iMovie", icon: IMovieIcon },
  { name: "Final Cut", icon: FinalCutIcon, running: true },
  { name: "VLC", icon: VlcIcon },
  { name: "iTunes", icon: ITunesIcon },
  { name: "iPhoto", icon: IPhotoIcon },
  { name: "GarageBand", icon: GarageBandIcon },
  { name: "iDVD", icon: IDvdIcon },
  { name: "TT", icon: TextTransformIcon },
  { name: "LiveType", icon: LiveTypeIcon },
  { name: "Photo Booth", icon: PhotoBoothIcon },
  { name: "Spaces", icon: SpacesIcon },
  { name: "Corkboard", icon: CorkboardIcon },
  { name: "GIMP", icon: GimpIcon },
  { name: "OpenOffice", icon: OpenOfficeIcon },
  { name: "Printer Setup", icon: PrinterIcon, running: true },
];

const Gradient = ({ id, stops }: { id: string; stops: string[] }) => (
  <linearGradient id={id} x1="0" y1="0" x2="0" y2="1">
    {stops.map((color, i) => (
      <stop key={color} offset={i / (stops.length - 1)} stopColor={color} />
    ))}
  </linearGradient>
);

const DockDefs = () => (
  <svg className="absolute size-0" aria-hidden="true">
    <defs>
      <Gradient id="finderDark" stops={["#7c98dc", "#4a6cc4", "#7d9ae4"]} />
      <Gradient id="finderLight" stops={["#c3cdf0", "#dfe4f8", "#b3c1ec"]} />
      <Gradient id="chrome" stops={["#f0f1f2", "#8b8e92", "#c9cbce"]} />
      <Gradient id="sky" stops={["#6a96c8", "#2f88cf", "#5fcdf0"]} />
      <Gradient id="teal" stops={["#5fa9a6", "#b6dcd0", "#4f9e9c"]} />
      <Gradient id="orange" stops={["#f07c10", "#ffb733"]} />
      <Gradient id="itunes" stops={["#9cc4ee", "#1f5fc0", "#37b0fa"]} />
      <Gradient id="sunset" stops={["#b23a08", "#f28c14", "#fbd24a", "#7c2b06"]} />
      <Gradient id="camera" stops={["#a3a8b0", "#6a6f78"]} />
      <Gradient id="wood" stops={["#a14e1c", "#e7a55a", "#7a3210"]} />
      <Gradient id="charcoal" stops={["#6a6a6a", "#2b2b2b", "#484848"]} />
      <Gradient id="slate" stops={["#5f6973", "#7d8892"]} />
      <Gradient id="ooBlue" stops={["#7db8e8", "#3b83c4", "#5ba5dc"]} />
      <Gradient id="fur" stops={["#8f8868", "#c2bb9c", "#a39b7c"]} />
      <pattern id="mesh" width="4" height="4" patternUnits="userSpaceOnUse">
        <path d="M0 2l2-2 2 2-2 2z" fill="#2f3033" />
      </pattern>
    </defs>
  </svg>
);

const DockButton = ({ item }: { item: DockItem }) => {
  const Icon = item.icon;
  return (
    <button aria-label={item.name} className="relative flex h-[82px] min-w-0 flex-1 justify-center">
      <svg
        viewBox="0 0 64 64"
        className="size-16 shrink-0 overflow-visible [-webkit-box-reflect:below_-2px_linear-gradient(transparent_60%,rgba(0,0,0,.35))]"
      >
        <Icon />
      </svg>
      {item.running ? (
        <span className="absolute bottom-[4px] left-1/2 h-[7px] w-[14px] -translate-x-1/2 rounded-full bg-[radial-gradient(closest-side,#fff,#a5d4ff_50%,transparent)]" />
      ) : null}
    </button>
  );
};

const Dock = () => (
  <nav aria-label="Dock" className="absolute inset-x-0 bottom-0 z-20 flex justify-center">
    <DockDefs />
    <div className="relative flex w-[1351px] pr-[29px] pl-[34px]">
      <div className="absolute inset-x-0 bottom-0 h-[49px] bg-[linear-gradient(to_bottom,rgba(190,178,190,.5)_9px,#d4d5d9_9px,#d4d5d9_10px,#b5b6bb_10px,#b5b6bb_22px,#cfcfd1_22px,#a4a4a7_24px,#b4b4b5_46px,#77777a_46px,#e6e6e6_47px)] [clip-path:polygon(32px_0,calc(100%-31px)_0,100%_100%,0_100%)]" />
      <div className="relative flex min-w-0 flex-1">
        {DOCK_ITEMS.map((item) => (
          <DockButton key={item.name} item={item} />
        ))}
      </div>
      <svg viewBox="0 0 33 49" className="relative mt-auto h-[49px] w-[33px] shrink-0" fill="#e4e4e6" opacity=".75">
        <path d="M12 2h10v1H12zM11 6h11v2H11zM10 11h13v3H10zM9 17h15v3H9zM7 27h19v4H7zM6 37h21v5H6z" />
      </svg>
      <div className="relative flex w-[125px] shrink-0">
        <DockButton item={{ name: "Magazine", icon: MagazineIcon }} />
        <DockButton item={{ name: "Trash", icon: TrashIcon }} />
      </div>
    </div>
  </nav>
);

const STARS = [
  [30, 12], [7, 37], [5, 45], [38, 44], [44, 49], [69, 12], [74, 37], [90, 30],
  [1465, 18], [1487, 16], [1517, 22], [1517, 38], [1548, 26], [1567, 29], [1570, 40], [1590, 54], [1530, 51], [1580, 12],
];

const App = () => (
  <main className="relative flex h-screen flex-col overflow-hidden bg-[#05010f] font-['Noto_Sans','Open_Sans',sans-serif]">
    <MenuBar />
    <div className="flex min-h-0 flex-1">
      <Browser />
      <Viewer />
      <Canvas />
    </div>
    <Timeline />
    <div className="h-[59px] shrink-0 bg-[linear-gradient(to_right,#070120,#12042a_15%,#2c0735_35%,#2a0838_50%,#120a22_68%,#03030a_80%,#04040a)]">
      <svg className="h-full w-full" fill="#8b93b8">
        {STARS.map(([x, y]) => (
          <circle key={`${x}-${y}`} cx={x} cy={y} r="1" />
        ))}
      </svg>
    </div>
    <Dock />
  </main>
);

export default App;
